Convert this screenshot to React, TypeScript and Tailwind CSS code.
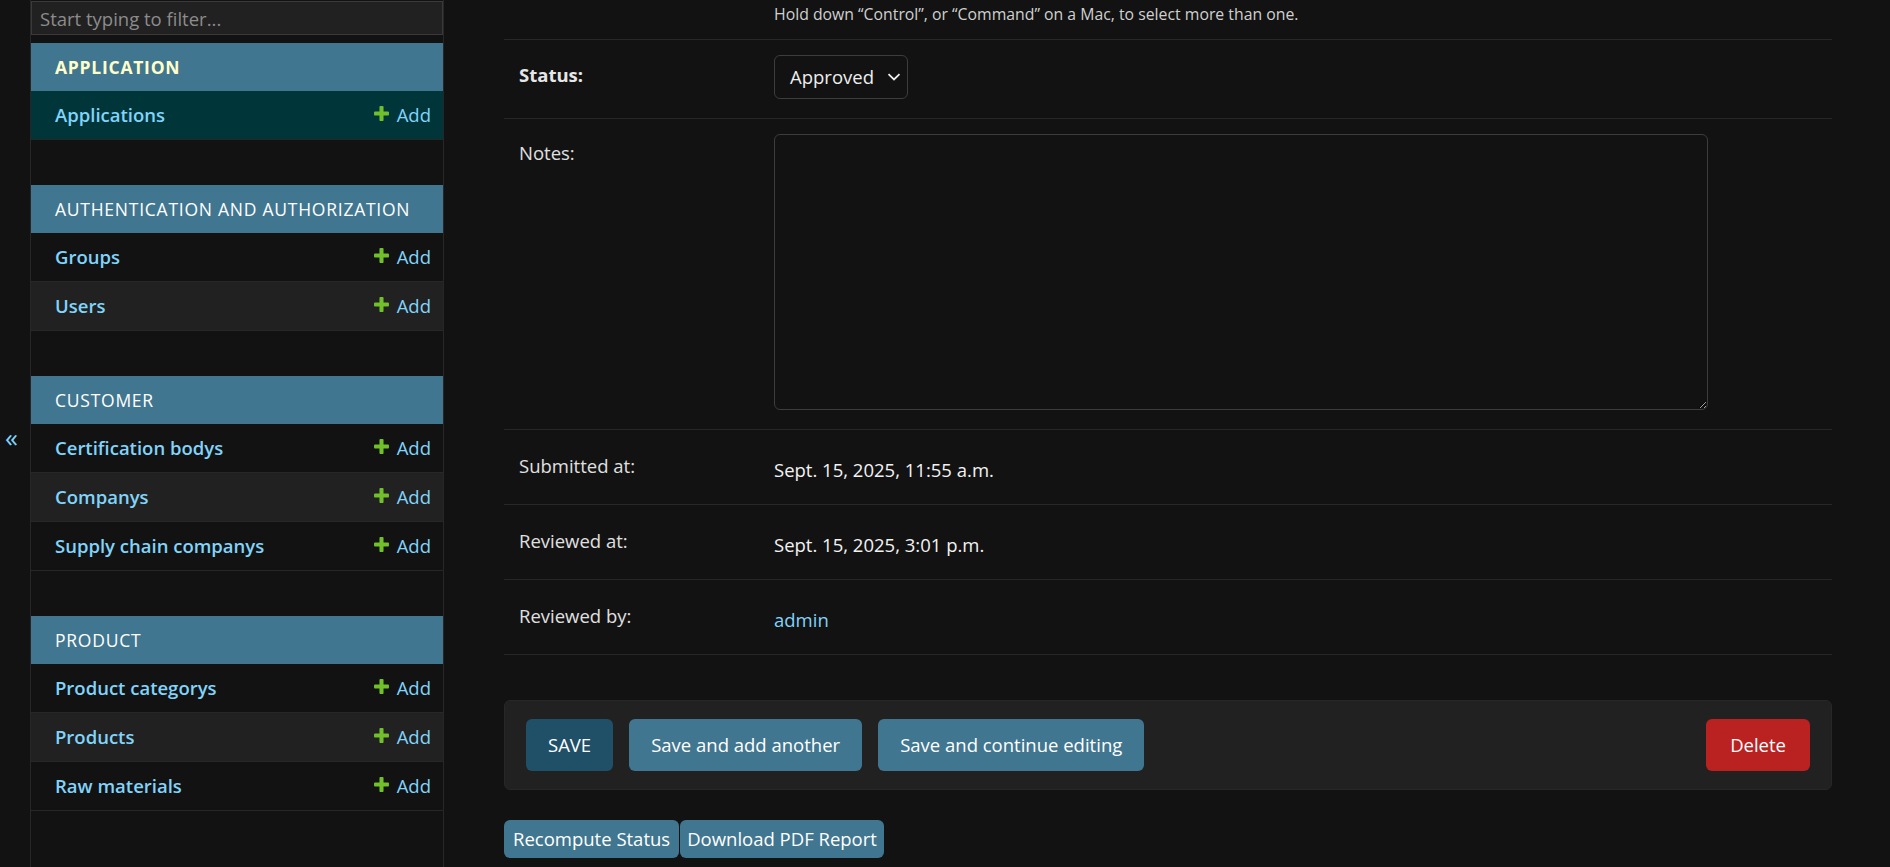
import React from "react";

type Section = { title: string; current?: boolean; models: { name: string; current?: boolean }[] };

const sections: Section[] = [
  { title: "Application", current: true, models: [{ name: "Applications", current: true }] },
  { title: "Authentication and Authorization", models: [{ name: "Groups" }, { name: "Users" }] },
  {
    title: "Customer",
    models: [{ name: "Certification bodys" }, { name: "Companys" }, { name: "Supply chain companys" }],
  },
  {
    title: "Product",
    models: [{ name: "Product categorys" }, { name: "Products" }, { name: "Raw materials" }],
  },
];

const readonlyRows = [
  { label: "Submitted at:", value: "Sept. 15, 2025, 11:55 a.m." },
  { label: "Reviewed at:", value: "Sept. 15, 2025, 3:01 p.m." },
  { label: "Reviewed by:", value: "admin", link: true },
];

function PlusIcon() {
  return (
    <svg viewBox="0 0 1792 1792" className="mb-[4px] h-[19px] w-[19px] shrink-0">
      <path
        fill="#70bf2b"
        d="M1600 796v192q0 40-28 68t-68 28h-416v416q0 40-28 68t-68 28h-192q-40 0-68-28t-28-68v-416h-416q-40 0-68-28t-28-68v-192q0-40 28-68t68-28h416v-416q0-40 28-68t68-28h192q40 0 68 28t28 68v416h416q40 0 68 28t28 68z"
      />
    </svg>
  );
}

function Sidebar() {
  return (
    <nav className="flex w-[413px] shrink-0 flex-col border-r border-[#272727]">
      <input
        readOnly
        placeholder="Start typing to filter..."
        className="mt-[1px] mb-[8px] h-[34px] w-full border border-[#3a3a3a] bg-[#212121] px-[8px] text-[18.5px] text-[#eeeeee] outline-none placeholder:text-[#8c8c8c]"
      />
      {sections.map((s) => (
        <div key={s.title} className="mb-[45px]">
          <div
            className={
              s.current
                ? "flex h-[48px] items-center bg-[#417690] pl-[24px] text-[17.5px] font-bold uppercase tracking-[0.75px] text-[#ffffcc]"
                : "flex h-[48px] items-center bg-[#417690] pl-[24px] text-[17.5px] uppercase tracking-[0.75px] text-white"
            }
          >
            {s.title}
          </div>
          {s.models.map((m, i) => (
            <div
              key={m.name}
              className={
                m.current
                  ? "flex h-[49px] items-center justify-between border-b border-[#272727] bg-[#00363a] pl-[24px] pr-[12px]"
                  : i % 2 === 1
                    ? "flex h-[49px] items-center justify-between border-b border-[#272727] bg-[#212121] pl-[24px] pr-[12px]"
                    : "flex h-[49px] items-center justify-between border-b border-[#272727] bg-[#121212] pl-[24px] pr-[12px]"
              }
            >
              <span className="text-[18.5px] font-semibold text-[#81d4fa]">{m.name}</span>
              <span className="flex items-center gap-[6px] text-[18.5px] text-[#81d4fa]">
                <PlusIcon />
                Add
              </span>
            </div>
          ))}
        </div>
      ))}
    </nav>
  );
}

export default function App() {
  return (
    <div className="flex h-[867px] w-full overflow-hidden bg-[#121212] font-['Open_Sans',sans-serif] text-[#eeeeee]">
      <div className="flex w-[31px] shrink-0 items-center border-r border-[#272727] pl-[5px]">
        <span className="pt-[6px] text-[26px] leading-none text-[#81d4fa]">«</span>
      </div>
      <Sidebar />

      <main className="min-w-0 flex-1 pl-[60px] pr-[58px]">
        <div className="h-[40px] border-b border-[#272727] pl-[270px] pt-[2px] text-[15.8px] leading-[24px] text-[#d0d0d0]">
          Hold down “Control”, or “Command” on a Mac, to select more than one.
        </div>

        <div className="flex border-b border-[#272727] p-[15px]">
          <div className="w-[255px] shrink-0 pt-[5px] text-[18.5px] font-bold leading-[30px] text-[#e6e6e6]">
            Status:
          </div>
          <div className="mb-[4px] flex h-[44px] w-[134px] items-center justify-between rounded-[6px] border border-[#3d3d3d] pl-[15px] pr-[6px] text-[18.5px] text-[#eeeeee]">
            Approved
            <svg viewBox="0 0 14 8" className="h-[8px] w-[14px]">
              <path d="M1.5 1.2 7 6.5l5.5-5.3" fill="none" stroke="#eeeeee" strokeWidth="1.8" />
            </svg>
          </div>
        </div>

        <div className="flex border-b border-[#272727] p-[15px]">
          <div className="w-[255px] shrink-0 pt-[4px] text-[18.5px] leading-[30px] text-[#e0e0e0]">Notes:</div>
          <textarea
            readOnly
            className="mb-[4px] block h-[276px] w-[934px] rounded-[6px] border border-[#3d3d3d] bg-[#121212] p-[8px] text-[18.5px] outline-none scheme-dark"
          />
        </div>

        {readonlyRows.map((r) => (
          <div key={r.label} className="flex border-b border-[#272727] p-[15px]">
            <div className="w-[255px] shrink-0 pt-[6px] text-[18.5px] leading-[30px] text-[#e0e0e0]">{r.label}</div>
            <div
              className={
                r.link
                  ? "mb-[4px] pt-[10px] text-[18.5px] leading-[30px] text-[#81d4fa]"
                  : "mb-[4px] pt-[10px] text-[18.5px] leading-[30px] text-[#f2f2f2]"
              }
            >
              {r.value}
            </div>
          </div>
        ))}

        <div className="mt-[45px] flex gap-[16px] rounded-[6px] border border-[#272727] bg-[#212121] px-[21px] py-[18px]">
          <button className="h-[52px] rounded-[6px] bg-[#205067] px-[22px] text-[18.5px] text-white">SAVE</button>
          <button className="h-[52px] rounded-[6px] bg-[#417690] px-[22px] text-[18.5px] text-white">
            Save and add another
          </button>
          <button className="h-[52px] rounded-[6px] bg-[#417690] px-[22px] text-[18.5px] text-white">
            Save and continue editing
          </button>
          <button className="ml-auto h-[52px] rounded-[6px] bg-[#ba2121] px-[24px] text-[18.5px] text-white">
            Delete
          </button>
        </div>

        <div className="mt-[30px] flex gap-[1px]">
          <button className="h-[38px] rounded-[6px] bg-[#417690] px-[9px] text-[18.5px] text-white">
            Recompute Status
          </button>
          <button className="h-[38px] rounded-[6px] bg-[#417690] px-[7px] text-[18.5px] text-white">
            Download PDF Report
          </button>
        </div>
      </main>
    </div>
  );
}
